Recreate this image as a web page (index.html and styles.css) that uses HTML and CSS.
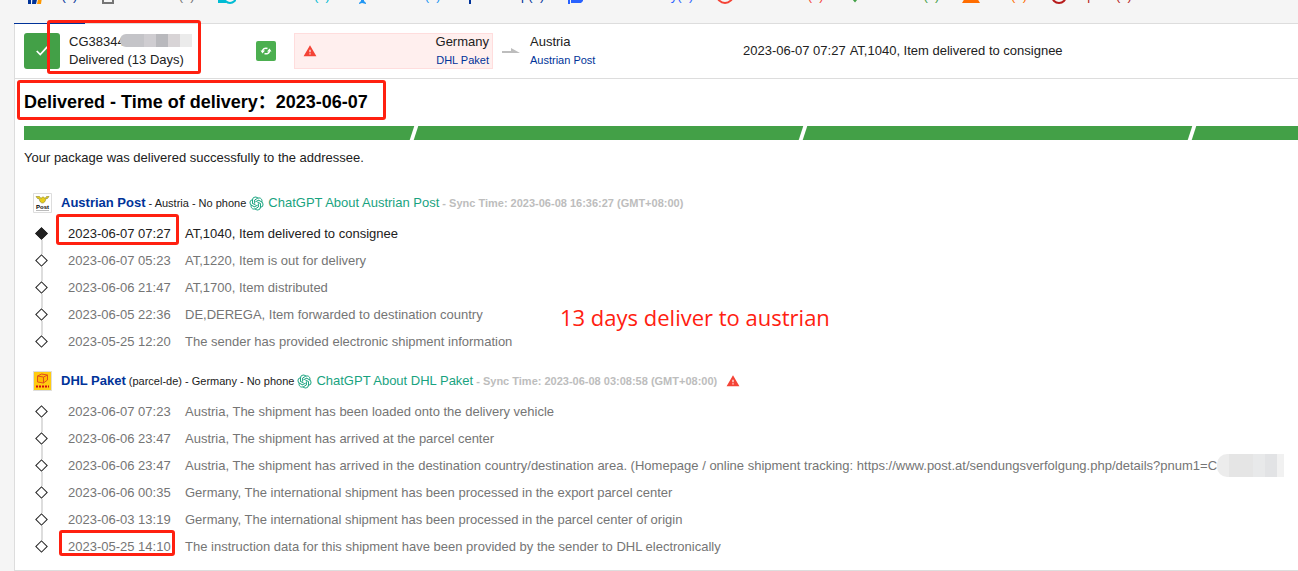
FILE: index.html
```html
<!DOCTYPE html>
<html lang="en">
<head>
  <meta charset="UTF-8">
  <meta name="viewport" content="width=device-width, initial-scale=1.0">
  <title>Tracking</title>
  <link rel="stylesheet" href="styles.css">
</head>
<body>

  <svg class="symbols" aria-hidden="true">
    <symbol id="warn" viewBox="0 0 24 24">
      <path fill="#f44336" d="M1 21h22L12 2 1 21zm12-3h-2v-2h2v2zm0-4h-2v-4h2v4z"/>
    </symbol>
    <symbol id="gpt" viewBox="0 0 24 24">
      <g fill="none" stroke="#19a37f" stroke-width="1.6" stroke-linejoin="round">
        <path id="petal" d="M9 12.2V6.4l4.8-2.8c3.2-1.7 7 .6 7 4.1 0 .8-.1 1.3-.4 2"/>
        <use href="#petal" transform="rotate(60 12 12)"/>
        <use href="#petal" transform="rotate(120 12 12)"/>
        <use href="#petal" transform="rotate(180 12 12)"/>
        <use href="#petal" transform="rotate(240 12 12)"/>
        <use href="#petal" transform="rotate(300 12 12)"/>
      </g>
    </symbol>
  </svg>

  <nav class="tabs">
    <a class="tab all" href="#"><svg viewBox="0 0 18 18"><path fill="#003399" d="M1 4h5v13H3V7H1zM8 4h6l-3 13H7z"/><path fill="#ff9800" d="M15 4h3l-2 13h-4z"/></svg>All(1)</a>
    <a class="tab notfound" href="#"><svg viewBox="0 0 18 18"><path fill="none" stroke="#757575" stroke-width="2" d="M3 2h10v14H3z"/></svg>Not found(0)</a>
    <a class="tab info" href="#"><svg viewBox="0 0 18 18"><path fill="#00bcd4" d="M0 12h8v4H0z"/><circle cx="12" cy="10" r="6" fill="none" stroke="#00bcd4" stroke-width="2"/></svg>Info received(0)</a>
    <a class="tab transit" href="#"><svg viewBox="0 0 18 18"><path fill="#2196f3" d="M8 2h3v5l6 4v2l-6-2v3l2 2v1l-4-1-3 1v-1l2-2v-3l-6 2v-2l6-4z"/></svg>In transit(0)</a>
    <a class="tab pickup" href="#"><svg viewBox="0 0 18 18"><path fill="#003399" d="M5 2h8v9H7v6H5z"/></svg>Pick up(0)</a>
    <a class="tab out" href="#"><svg viewBox="0 0 18 18"><path fill="#2962ff" d="M1 4h2v13H1zM4 4h12v10l-2 2H4z"/></svg>Out for delivery(0)</a>
    <a class="tab undelivered" href="#"><svg viewBox="0 0 18 18"><circle cx="9" cy="8" r="8" fill="none" stroke="#f44336" stroke-width="2"/></svg>Undelivered(0)</a>
    <a class="tab delivered" href="#"><svg viewBox="0 0 18 18"><path fill="none" stroke="#43a047" stroke-width="2" d="M3 8l5 6 8-10"/></svg>Delivered(1)</a>
    <a class="tab alert" href="#"><svg viewBox="0 0 18 18"><path fill="#ff6d00" d="M9 1l9 15H0z"/></svg>Alert(0)</a>
    <a class="tab expired" href="#"><svg viewBox="0 0 18 18"><circle cx="9" cy="9" r="7" fill="none" stroke="#b71c1c" stroke-width="2"/></svg>Expired(0)</a>
  </nav>

  <main class="panel">
    <div class="summary">
      <div class="status"><svg viewBox="0 0 24 24"><path fill="none" stroke="#fff" stroke-width="3" d="M3 12l6 6L21 5"/></svg></div>
      <div class="parcel">
        <div>CG38344</div>
        <div>Delivered (13 Days)</div>
        <span class="mosaic mosaic-top"></span>
      </div>
      <button class="refresh" aria-label="Refresh">
        <svg viewBox="0 0 24 24"><path fill="none" stroke="#fff" stroke-width="3" d="M5 13c0-5 5-8 10-6M19 11c0 5-5 8-10 6"/><path fill="#fff" d="M1 11h9l-5 6zM23 13h-9l5-6z"/></svg>
      </button>
      <div class="origin">
        <svg class="warn"><use href="#warn"/></svg>
        <div>
          <div>Germany</div>
          <a href="#">DHL Paket</a>
        </div>
      </div>
      <svg class="arrow" viewBox="0 0 18 6"><path fill="#bdbdbd" d="M0 3h9V0l9 5H0z"/></svg>
      <div class="destination">
        <div>Austria</div>
        <a href="#">Austrian Post</a>
      </div>
      <div class="latest"><time>2023-06-07 07:27</time><span>AT,1040, Item delivered to consignee</span></div>
      <span class="mark mark-parcel"></span>
    </div>

    <section class="detail">
      <h1>Delivered - Time of delivery：2023-06-07<span class="mark mark-title"></span></h1>
      <div class="progress"><i></i><i></i><i></i><i></i></div>
      <p>Your package was delivered successfully to the addressee.</p>

      <section class="carrier">
        <header>
          <svg class="logo" viewBox="0 0 19 20"><path fill="#fff" stroke="#ddd" d="M.5.5h18v19H.5z"/><path fill="#e8cf1c" stroke="#8d8430" stroke-width=".6" d="M3 3.500h3.500l1.500 2c1-2 3-2 4 0l1.500-2H16l-1.500 2H13c-.5 3-2 4.500-3.500 4.500S6.500 8.500 6 5.500H4.500z"/><text x="3" y="16">Post</text><path stroke="#aaa" stroke-width=".8" d="M3 17.500h13"/></svg>
          <a class="name" href="#">Austrian Post</a>
          <span>- Austria</span><span>- No phone</span>
          <a class="gpt" href="#"><svg><use href="#gpt"/></svg>ChatGPT About Austrian Post</a>
          <span class="sync">- Sync Time: 2023-06-08 16:36:27 (GMT+08:00)</span>
        </header>
        <ul>
          <li class="current"><time>2023-06-07 07:27<span class="mark mark-time"></span></time>AT,1040, Item delivered to consignee</li>
          <li><time>2023-06-07 05:23</time>AT,1220, Item is out for delivery</li>
          <li><time>2023-06-06 21:47</time>AT,1700, Item distributed</li>
          <li><time>2023-06-05 22:36</time>DE,DEREGA, Item forwarded to destination country</li>
          <li><time>2023-05-25 12:20</time>The sender has provided electronic shipment information</li>
        </ul>
        <strong class="note">13 days deliver to austrian</strong>
      </section>

      <section class="carrier">
        <header>
          <svg class="logo" viewBox="0 0 19 20"><path fill="#fc1" stroke="#ddd" d="M.5.5h18v19H.5z"/><path fill="#fb0" stroke="#e0501c" d="M4.500 5l4-2 6 1v5l-4 3-6-1zM4.500 5l6 1 4-2M10.500 6v6"/><path stroke="#d40511" stroke-width="2" stroke-dasharray="2 1" d="M3 15.500h13"/></svg>
          <a class="name" href="#">DHL Paket</a>
          <span>(parcel-de)</span><span>- Germany</span><span>- No phone</span>
          <a class="gpt" href="#"><svg><use href="#gpt"/></svg>ChatGPT About DHL Paket</a>
          <span class="sync">- Sync Time: 2023-06-08 03:08:58 (GMT+08:00)</span>
          <svg class="warn"><use href="#warn"/></svg>
        </header>
        <ul>
          <li><time>2023-06-07 07:23</time>Austria, The shipment has been loaded onto the delivery vehicle</li>
          <li><time>2023-06-06 23:47</time>Austria, The shipment has arrived at the parcel center</li>
          <li><time>2023-06-06 23:47</time>Austria, The shipment has arrived in the destination country/destination area. (Homepage / online shipment tracking: https://www.post.at/sendungsverfolgung.php/details?pnum1=C<span class="mosaic mosaic-url"></span></li>
          <li><time>2023-06-06 00:35</time>Germany, The international shipment has been processed in the export parcel center</li>
          <li><time>2023-06-03 13:19</time>Germany, The international shipment has been processed in the parcel center of origin</li>
          <li><time>2023-05-25 14:10<span class="mark mark-last"></span></time>The instruction data for this shipment have been provided by the sender to DHL electronically</li>
        </ul>
      </section>
    </section>
  </main>

</body>
</html>
```
FILE: styles.css
```css
* {
  margin: 0;
  padding: 0;
  box-sizing: border-box;
}

body {
  background-color: #f5f5f5;
  color: #212121;
  font-family: Arial, "Liberation Sans", "Noto Sans CJK SC", sans-serif;
  font-size: 13px;
  line-height: 18px;
}

a {
  color: #003399;
  text-decoration: none;
}

.symbols {
  position: absolute;
  width: 0;
  height: 0;
}

.tabs {
  display: flex;
  align-items: flex-end;
  height: 23px;
  padding: 0 0 18px 25px;
  overflow: hidden;
}

.tab {
  display: flex;
  flex-shrink: 0;
  align-items: center;
  gap: 4px;
  margin-right: 23px;
}

.tab svg {
  width: 18px;
  height: 18px;
}

.notfound { color: #757575; }
.info { color: #00bcd4; }
.transit { color: #2196f3; }
.out { color: #2962ff; }
.undelivered { color: #f44336; }
.delivered { color: #43a047; }
.alert { color: #ff6d00; }
.expired { color: #b71c1c; }

.panel {
  margin-left: 14px;
  background-color: #fff;
  border: 1px solid #ddd;
  border-right: none;
}

.summary {
  position: relative;
  display: flex;
  align-items: center;
  height: 55px;
  padding-left: 9px;
  border-bottom: 1px solid #ddd;
}

.summary::before {
  content: "";
  position: absolute;
  top: -1px;
  left: -1px;
  width: 71px;
  height: 1px;
  background-color: #003399;
}

.status {
  display: flex;
  align-items: center;
  justify-content: center;
  width: 36px;
  height: 36px;
  border-radius: 3px;
  background-color: #43a047;
}

.status svg {
  width: 14px;
  height: 14px;
}

.parcel {
  position: relative;
  width: 187px;
  margin-left: 9px;
}

.refresh {
  display: flex;
  align-items: center;
  justify-content: center;
  width: 20px;
  height: 20px;
  border: none;
  border-radius: 2px;
  background-color: #4caf50;
}

.refresh svg {
  width: 12px;
  height: 12px;
}

.origin {
  display: flex;
  align-items: center;
  justify-content: space-between;
  width: 199px;
  height: 36px;
  margin-left: 18px;
  padding: 0 3px 0 8px;
  border: 1px solid #fdd;
  background-color: #ffefee;
  text-align: right;
}

.origin a,
.destination a {
  display: block;
  font-size: 11px;
}

.warn {
  width: 14px;
  height: 14px;
}

.arrow {
  width: 18px;
  height: 6px;
  margin: 0 10px 0 9px;
}

.destination {
  width: 213px;
}

.latest {
  display: flex;
  gap: 4px;
}

.detail {
  padding: 10px 0 10px 9px;
}

h1 {
  position: relative;
  color: #000;
  font-size: 18px;
  line-height: 26px;
}

.progress {
  display: flex;
  gap: 4px;
  height: 14px;
  margin-top: 11px;
  overflow: hidden;
}

.progress i {
  flex: 0 0 385px;
  background-color: #43a047;
  transform: skewX(-18deg);
}

.progress i:first-child {
  flex-basis: 391px;
  margin-left: -3px;
}

.detail p {
  margin: 9px 0 26px;
}

.carrier {
  position: relative;
  padding-left: 9px;
}

.carrier header {
  display: flex;
  align-items: center;
  height: 20px;
  gap: 3px;
  font-size: 11px;
}

.logo {
  width: 19px;
  height: 20px;
  margin-right: 6px;
}

.logo text {
  font-size: 6px;
  font-weight: bold;
}

.carrier .name {
  font-size: 13px;
  font-weight: bold;
}

.gpt {
  display: flex;
  align-items: center;
  gap: 4px;
  color: #19a37f;
  font-size: 13px;
}

.gpt svg {
  width: 15px;
  height: 15px;
}

.sync {
  color: #bdbdbd;
  font-weight: bold;
}

.carrier header .warn {
  margin-left: 6px;
}

.carrier ul {
  margin: 7px 0 16px;
  list-style: none;
}

.carrier:last-child ul {
  margin-bottom: 0;
}

.carrier li {
  position: relative;
  display: flex;
  height: 27px;
  align-items: center;
  padding-left: 35px;
  color: #757575;
  white-space: nowrap;
}

.carrier .current {
  color: #212121;
}

/* diamond marker */
.carrier li::before {
  content: "";
  position: absolute;
  left: 4px;
  width: 7px;
  height: 7px;
  border: 1px solid #212121;
  background-color: #fff;
  transform: rotate(45deg);
}

.carrier .current::before {
  background-color: #212121;
}

.carrier li:not(:last-child)::after {
  content: "";
  position: absolute;
  top: 20px;
  left: 8px;
  width: 2px;
  height: 14px;
  background-color: #ddd;
}

.carrier time {
  position: relative;
  flex: 0 0 117px;
}

.mosaic-top {
  position: absolute;
  top: 1px;
  left: 51px;
  width: 72px;
  height: 13px;
  border-radius: 6px 0 0 6px;
  background: linear-gradient(90deg, #c4c4c8 0 24px, #cfcdd1 24px 36px, #b9b9bd 36px 48px, #d8d4d6 48px 60px, #ebebeb 60px);
}

.mosaic-url {
  flex: 1;
  max-width: 97px;
  height: 23px;
  margin-right: 14px;
  border-radius: 10px 0 0 10px;
  background: linear-gradient(90deg, #ececec 0 12px, #e5e5e5 12px 36px, #e8e9ea 36px 48px, #e2e3e5 48px 60px, #f1f1f1 60px);
}

/* red annotations */
.mark {
  position: absolute;
  border: 3px solid #ff2010;
  border-radius: 3px;
}

.mark-parcel {
  top: -4px;
  left: 32px;
  width: 154px;
  height: 54px;
}

.mark-title {
  top: -9px;
  left: -7px;
  width: 369px;
  height: 40px;
}

.mark-time {
  top: -11px;
  left: -12px;
  width: 123px;
  height: 31px;
}

.mark-last {
  top: -8px;
  left: -9px;
  width: 116px;
  height: 26px;
}

.note {
  position: absolute;
  top: 109px;
  left: 536px;
  color: #ff2010;
  font-family: "Open Sans", "Noto Sans", sans-serif;
  font-size: 22px;
  font-weight: normal;
  line-height: 30px;
}
```
